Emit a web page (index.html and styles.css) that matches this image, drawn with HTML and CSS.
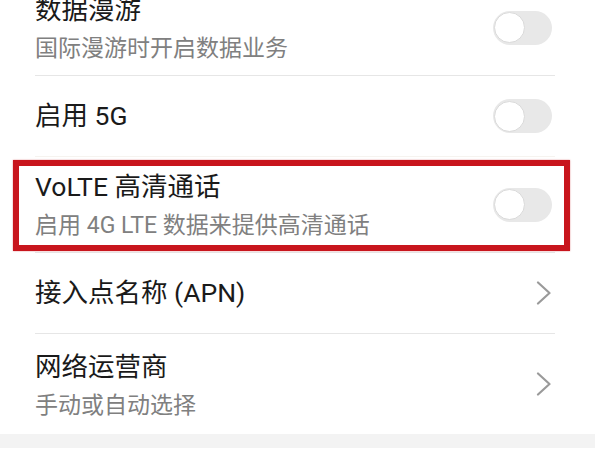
FILE: index.html
```html
<!DOCTYPE html>
<html lang="zh-CN">
<head>
<meta charset="utf-8">
<title>移动网络</title>
<link rel="stylesheet" href="styles.css">
</head>
<body>
<div class="list">
  <div class="row row-double r1">
    <div class="text">
      <div class="title">数据漫游</div>
      <div class="sub">国际漫游时开启数据业务</div>
    </div>
    <div class="switch"><span class="knob"></span></div>
  </div>
  <div class="row row-single r2">
    <div class="text">
      <div class="title">启用 5G</div>
    </div>
    <div class="switch"><span class="knob"></span></div>
  </div>
  <div class="row row-double r3 highlighted">
    <div class="text">
      <div class="title">VoLTE 高清通话</div>
      <div class="sub">启用 4G LTE 数据来提供高清通话</div>
    </div>
    <div class="switch"><span class="knob"></span></div>
    <div class="mark"></div>
  </div>
  <div class="row row-single r4">
    <div class="text">
      <div class="title">接入点名称 (APN)</div>
    </div>
    <svg class="chev" width="16" height="24" viewBox="0 0 16 24"><polyline points="2,1.5 13.5,12 2,22.5" fill="none" stroke="#9a9a9a" stroke-width="2.2" stroke-linecap="round" stroke-linejoin="round"/></svg>
  </div>
  <div class="row row-double r5 last">
    <div class="text">
      <div class="title">网络运营商</div>
      <div class="sub">手动或自动选择</div>
    </div>
    <svg class="chev" width="16" height="24" viewBox="0 0 16 24"><polyline points="2,1.5 13.5,12 2,22.5" fill="none" stroke="#9a9a9a" stroke-width="2.2" stroke-linecap="round" stroke-linejoin="round"/></svg>
  </div>
  <div class="band"></div>
</div>
</body>
</html>
```
FILE: styles.css
```css
html, body {
  margin: 0;
  padding: 0;
  background: #ffffff;
  width: 600px;
  height: 450px;
  overflow: hidden;
}
body {
  font-family: Roboto, "Noto Sans CJK SC", "Noto Sans", sans-serif;
  color: #1c1c1c;
}
.list {
  margin-top: -20px;
  display: flex;
  flex-direction: column;
}
.row {
  margin: 0 45px 0 35px;
  display: flex;
  align-items: center;
  justify-content: space-between;
  border-bottom: 1px solid #e6e6e6;
  box-sizing: border-box;
  position: relative;
}
.r1 { height: 96px; }
.r2 { height: 81px; border-bottom-color: #f6f3ef; }
.r3 { height: 96px; }
.r4 { height: 81px; }
.r5 { height: 100px; border-bottom: none; }
.text {
  display: flex;
  flex-direction: column;
  padding-top: 3px;
}
.r2 .text, .r4 .text { padding-top: 0; }
.title {
  font-size: 26.5px;
  line-height: 32px;
  color: #1a1a1a;
}
.sub {
  font-size: 23px;
  line-height: 30px;
  color: #808080;
  margin-top: 8px;
}
.switch {
  width: 59px;
  height: 34px;
  border-radius: 17px;
  background: #e8e8e8;
  margin-right: 3px;
  display: flex;
  align-items: center;
  padding-left: 1px;
  box-sizing: border-box;
}
.knob {
  width: 31px;
  height: 31px;
  border-radius: 50%;
  background: #ffffff;
  border: 1px solid #dadada;
  box-sizing: border-box;
}
.chev {
  margin-right: 3px;
}
.mark {
  position: absolute;
  left: -22px;
  right: -15px;
  top: 3px;
  bottom: 1px;
  border: 6px solid #c8151d;
  box-shadow: 0 0 1.5px rgba(200, 21, 29, 0.5);
  pointer-events: none;
}
.band {
  height: 14px;
  margin-right: 5px;
  background: #f3f3f3;
}
```
